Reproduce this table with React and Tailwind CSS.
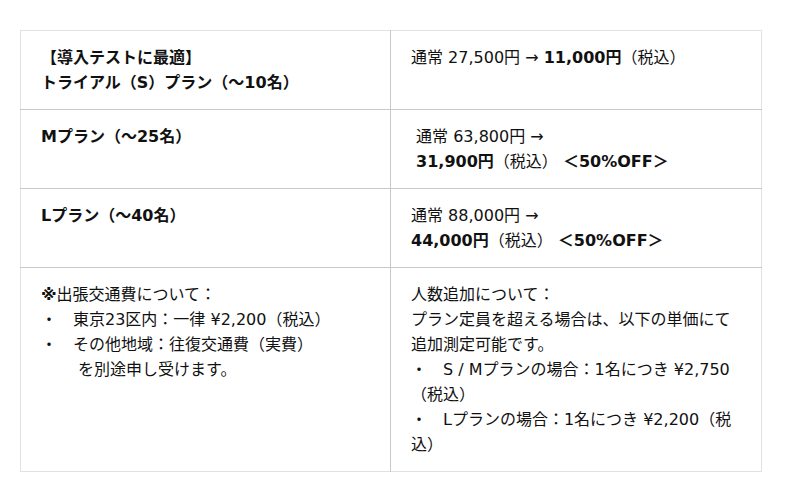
import React from "react";

// 料金表
const ROWS = [
  {
    plan: (
      <>
        【導入テストに最適】
        <br />
        トライアル（S）プラン（〜10名）
      </>
    ),
    price: (
      <>
        通常 27,500円 → <b>11,000円</b>（税込）
      </>
    ),
  },
  {
    plan: <>Mプラン（〜25名）</>,
    price: (
      <>
        {"\u00a0"}通常 63,800円 →
        <br />
        {"\u00a0"}<b>31,900円</b>（税込） <b>＜50%OFF＞</b>
      </>
    ),
  },
  {
    plan: <>Lプラン（〜40名）</>,
    price: (
      <>
        通常 88,000円 →
        <br />
        <b>44,000円</b>（税込） <b>＜50%OFF＞</b>
      </>
    ),
  },
];

export default function App() {
  return (
    <div
      className="bg-white text-[#111] text-[16px] leading-[25px] pt-[30px] pl-[20px]"
      style={{ fontFamily: '"DejaVu Sans", "Noto Sans CJK JP", sans-serif' }}
    >
      <table className="w-[742px] border-collapse border border-[#e2e2e2] table-fixed">
        <tbody>
          {ROWS.map((row, i) => (
            <tr key={i} className="border-b border-[#c8c8c8]">
              <td className="w-[370px] align-top px-[20px] py-[14px] border-r border-[#c8c8c8] font-bold">
                {row.plan}
              </td>
              <td className="align-top px-[20px] py-[14px]">{row.price}</td>
            </tr>
          ))}
          <tr>
            <td className="align-top px-[20px] py-[14px] border-r border-[#c8c8c8]">
              <b>※</b>出張交通費について：
              <br />
              {"・\u3000東京23区内：一律 ¥2,200（税込）"}
              <br />
              {"・\u3000その他地域：往復交通費（実費）"}
              <br />
              {"\u3000\u3000\u00a0を別途申し受けます。"}
            </td>
            <td className="align-top px-[20px] py-[14px]">
              人数追加について：
              <br />
              プラン定員を超える場合は、以下の単価にて追加測定可能です。
              <br />
              {"・\u3000S / Mプランの場合：1名につき ¥2,750（税込）"}
              <br />
              {"・\u3000Lプランの場合：1名につき ¥2,200（税込）"}
            </td>
          </tr>
        </tbody>
      </table>
    </div>
  );
}
